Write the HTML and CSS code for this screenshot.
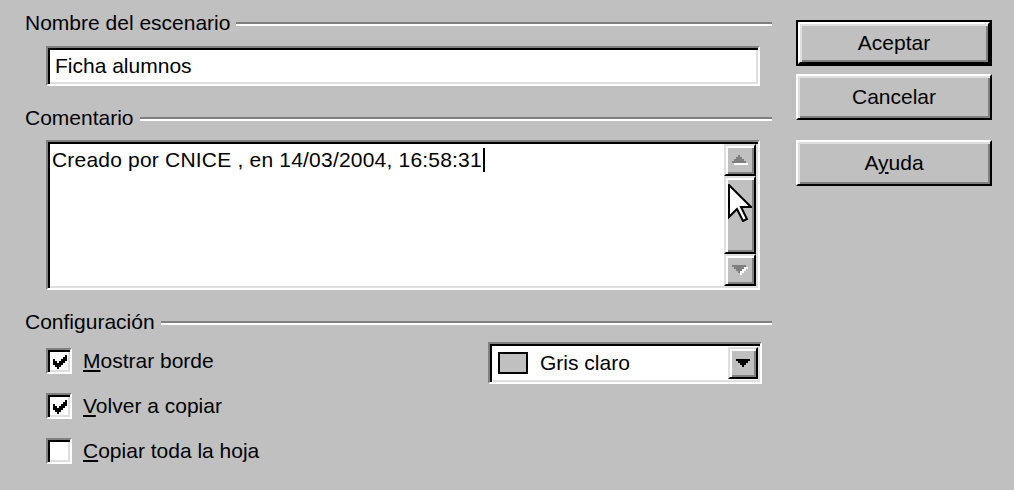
FILE: index.html
```html
<!DOCTYPE html>
<html lang="es">

<head>
    <meta charset="UTF-8">
    <title>Agregar escenario</title>
    <link rel="stylesheet" href="styles.css">
</head>

<body>
    <div class="dialog">
        <div class="main">
            <div class="group-title">
                <span>Nombre del escenario</span>
                <i class="rule"></i>
            </div>
            <div class="field sunken">Ficha alumnos</div>

            <div class="group-title comment-title">
                <span>Comentario</span>
                <i class="rule"></i>
            </div>
            <div class="memo sunken">
                <div class="memo-text">Creado por CNICE , en 14/03/2004, 16:58:31<span class="caret"></span></div>
                <div class="scrollbar">
                    <div class="sb-btn raised-light">
                        <svg width="16" height="10" viewBox="0 0 8 5" shape-rendering="crispEdges">
                            <path fill="#fff" d="M4 1h1v1h-1z M3 2h3v1h-3z M2 3h5v1h-5z M1 4h7v1h-7z" />
                            <path fill="#808080" d="M3 0h1v1h-1z M2 1h3v1h-3z M1 2h5v1h-5z M0 3h7v1h-7z" />
                        </svg>
                    </div>
                    <div class="sb-thumb raised-light"></div>
                    <div class="sb-btn raised-light">
                        <svg width="16" height="10" viewBox="0 0 8 5" shape-rendering="crispEdges">
                            <path fill="#fff" d="M1 1h7v1h-7z M2 2h5v1h-5z M3 3h3v1h-3z M4 4h1v1h-1z" />
                            <path fill="#808080" d="M0 0h7v1h-7z M1 1h5v1h-5z M2 2h3v1h-3z M3 3h1v1h-1z" />
                        </svg>
                    </div>
                </div>
                <!-- mouse pointer over the scrollbar -->
                <svg class="pointer" width="24" height="38" viewBox="0 0 12 19">
                    <path fill="#fff" stroke="#000" stroke-width="1" stroke-linejoin="miter"
                        d="M0.5 0.5 L0.5 16.5 L4.5 12.5 L7.5 18.5 L9.5 17.5 L6.5 11.5 L11.5 11.5 Z" />
                </svg>
            </div>

            <div class="group-title config-title">
                <span>Configuración</span>
                <i class="rule"></i>
            </div>
            <div class="config">
                <div class="checks">
                    <div class="check">
                        <span class="box">
                            <svg width="14" height="14" viewBox="0 0 7 7" shape-rendering="crispEdges">
                                <path d="M6 0h1v1h-1z M5 1h2v1h-2z M0 2h1v1h-1z M4 2h3v1h-3z M0 3h2v1h-2z M3 3h3v1h-3z M0 4h5v1h-5z M1 5h3v1h-3z M2 6h1v1h-1z" />
                            </svg>
                        </span>
                        <span><u>M</u>ostrar borde</span>
                    </div>
                    <div class="check">
                        <span class="box">
                            <svg width="14" height="14" viewBox="0 0 7 7" shape-rendering="crispEdges">
                                <path d="M6 0h1v1h-1z M5 1h2v1h-2z M0 2h1v1h-1z M4 2h3v1h-3z M0 3h2v1h-2z M3 3h3v1h-3z M0 4h5v1h-5z M1 5h3v1h-3z M2 6h1v1h-1z" />
                            </svg>
                        </span>
                        <span><u>V</u>olver a copiar</span>
                    </div>
                    <div class="check">
                        <span class="box"></span>
                        <span><u>C</u>opiar toda la hoja</span>
                    </div>
                </div>

                <div class="combo sunken">
                    <span class="swatch"></span>
                    <span class="combo-text">Gris claro</span>
                    <span class="combo-btn raised-light">
                        <svg width="14" height="8" viewBox="0 0 7 4" shape-rendering="crispEdges">
                            <path d="M0 0h7v1h-7z M1 1h5v1h-5z M2 2h3v1h-3z M3 3h1v1h-1z" />
                        </svg>
                    </span>
                </div>
            </div>
        </div>

        <div class="side">
            <button class="btn default">Aceptar</button>
            <button class="btn cancel">Cancelar</button>
            <button class="btn help">A<u>y</u>uda</button>
        </div>
    </div>
</body>

</html>
```

FILE: styles.css
```css
body {
    margin: 0;
    width: 1014px;
    height: 490px;
    overflow: hidden;
    background-color: #c0c0c0;
    font-family: "Liberation Sans", Arial, sans-serif;
    font-size: 21px;
    color: #000;
}

.dialog {
    display: flex;
}

.main {
    width: 772px;
    padding-left: 25px;
    box-sizing: border-box;
}

/* group headers: label followed by an etched line */
.group-title {
    display: flex;
    align-items: center;
    height: 22px;
    line-height: 22px;
    margin-top: 12px;
    white-space: nowrap;
}

.group-title .rule {
    flex: 1;
    height: 0;
    margin-left: 6px;
    margin-top: 2px;
    border-top: 2px solid #808080;
    border-bottom: 2px solid #fff;
}

.comment-title,
.config-title {
    margin-top: 21px;
}

/* 3D borders */
.sunken {
    box-sizing: border-box;
    background-color: #fff;
    border: 2px solid;
    border-color: #808080 #fff #fff #808080;
    box-shadow: inset 2px 2px 0 #000, inset -2px -2px 0 #dfdfdf;
}

.raised-light {
    box-sizing: border-box;
    background-color: #c0c0c0;
    border: 2px solid;
    border-color: #dfdfdf #000 #000 #dfdfdf;
    box-shadow: inset 2px 2px 0 #fff, inset -2px -2px 0 #808080;
}

.field {
    margin: 12px 0 0 21px;
    width: 714px;
    height: 40px;
    padding: 2px 7px;
    line-height: 32px;
}

.memo {
    position: relative;
    display: flex;
    margin: 11px 0 0 21px;
    width: 714px;
    height: 150px;
    padding: 2px;
}

.memo-text {
    flex: 1;
    padding: 4px 0 0 2px;
    line-height: 24px;
    letter-spacing: 0.2px;
    white-space: nowrap;
}

.caret {
    display: inline-block;
    width: 2px;
    height: 24px;
    margin-left: 1px;
    background-color: #000;
    vertical-align: top;
}

.scrollbar {
    width: 32px;
    display: flex;
    flex-direction: column;
}

.sb-btn {
    height: 32px;
    display: flex;
    align-items: center;
    justify-content: center;
}

.sb-thumb {
    flex: 1;
}

.pointer {
    position: absolute;
    left: 680px;
    top: 42px;
}

.config {
    display: flex;
    align-items: flex-start;
    margin-top: 9px;
}

.checks {
    flex: 1;
    margin-left: 21px;
    padding-top: 6px;
    display: flex;
    flex-direction: column;
    gap: 19px;
}

.check {
    display: flex;
    align-items: center;
    gap: 11px;
    height: 26px;
    line-height: 26px;
}

.box {
    width: 26px;
    height: 26px;
    box-sizing: border-box;
    background-color: #fff;
    border: 2px solid;
    border-color: #808080 #fff #fff #808080;
    box-shadow: inset 2px 2px 0 #000, inset -2px -2px 0 #dfdfdf;
    display: flex;
    align-items: center;
    justify-content: center;
}

.box svg {
    margin: 1px 0 0 1px;
}

u {
    text-decoration-thickness: 2px;
    text-underline-offset: 2px;
}

.combo {
    display: flex;
    align-items: center;
    width: 274px;
    height: 42px;
    margin-right: 10px;
    padding: 2px 2px 2px 8px;
}

.swatch {
    width: 30px;
    height: 22px;
    box-sizing: border-box;
    border: 2px solid #000;
    background-color: #c0c0c0;
}

.combo-text {
    flex: 1;
    margin-left: 12px;
    line-height: 30px;
}

.combo-btn {
    width: 30px;
    height: 32px;
    display: flex;
    align-items: center;
    justify-content: center;
}

/* dialog buttons */
.side {
    display: flex;
    flex-direction: column;
    padding-top: 20px;
    margin-left: 24px;
}

.btn {
    box-sizing: border-box;
    width: 196px;
    height: 46px;
    padding: 0;
    font: inherit;
    color: #000;
    background-color: #c0c0c0;
    border: 2px solid;
    border-color: #fff #000 #000 #fff;
    box-shadow: inset 2px 2px 0 #dfdfdf, inset -2px -2px 0 #808080;
}

.btn.default {
    width: 192px;
    height: 42px;
    margin: 2px;
    outline: 2px solid #000;
}

.btn.cancel {
    margin-top: 8px;
}

.btn.help {
    margin-top: 20px;
}
```
